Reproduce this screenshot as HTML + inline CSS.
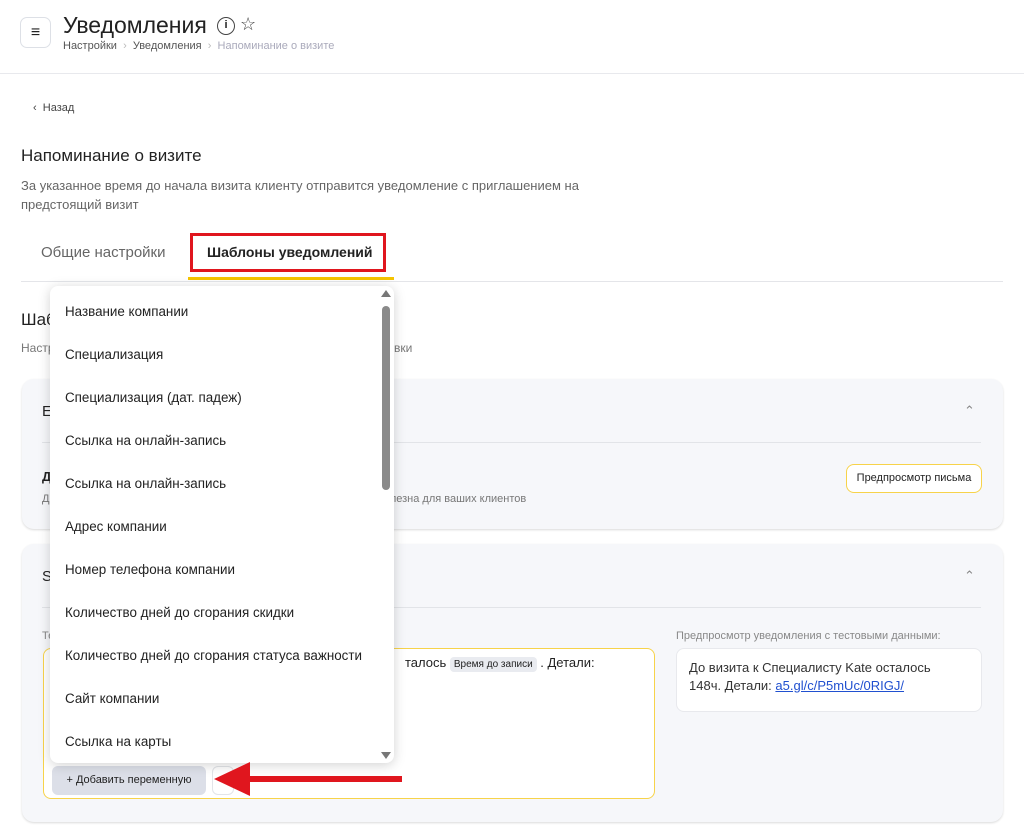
<!DOCTYPE html>
<html><head><meta charset="utf-8"><style>
*{box-sizing:border-box;margin:0;padding:0}
body{width:1024px;height:837px;overflow:hidden;background:#fff;font-family:"Liberation Sans",sans-serif;color:#222;position:relative}
.a{position:absolute}
.card{position:absolute;left:22px;width:981px;background:#f6f7fa;border-radius:12px;box-shadow:0 1px 2px rgba(0,0,0,.15)}
.dd{position:absolute;left:50px;top:286px;width:344px;height:477px;background:#fff;border-radius:8px;box-shadow:0 2px 12px rgba(0,0,0,.18)}
.dd div{position:absolute;left:15px;font-size:13.4px;color:#222}
</style></head><body>
<div class="a" style="left:20px;top:17px;width:31px;height:31px;border:1px solid #dde0e6;border-radius:7px;text-align:center;line-height:29px;font-size:16px">≡</div>
<div class="a" style="left:63px;top:12px;font-size:23px;color:#222">Уведомления</div>
<div class="a" style="left:217px;top:17px;width:18px;height:18px;border:1.5px solid #444;border-radius:50%;font-size:11px;text-align:center;line-height:15px;font-weight:bold">i</div>
<div class="a" style="left:240px;top:14px;font-size:18px;color:#444">☆</div>
<div class="a" style="left:63px;top:40px;font-size:11px;color:#555">Настройки &nbsp;<span style="color:#bbb">›</span>&nbsp; Уведомления &nbsp;<span style="color:#bbb">›</span>&nbsp; <span style="color:#aab">Напоминание о визите</span></div>
<div class="a" style="left:0;top:73px;width:1024px;height:1px;background:#e8e9ed"></div>
<div class="a" style="left:33px;top:102px;font-size:11px;color:#444">‹ &nbsp;Назад</div>
<div class="a" style="left:21px;top:146px;font-size:17px;color:#222">Напоминание о визите</div>
<div class="a" style="left:21px;top:176px;width:620px;font-size:13px;line-height:19px;color:#666">За указанное время до начала визита клиенту отправится уведомление с приглашением на предстоящий визит</div>
<div class="a" style="left:41px;top:244px;font-size:15px;color:#666">Общие настройки</div>
<div class="a" style="left:190px;top:233px;width:196px;height:39px;border:3px solid #e0161e"></div>
<div class="a" style="left:207px;top:244px;font-size:14px;font-weight:bold;color:#222">Шаблоны уведомлений</div>
<div class="a" style="left:21px;top:281px;width:982px;height:1px;background:#e4e5e9"></div>
<div class="a" style="left:188px;top:277px;width:206px;height:3px;background:#f5c400"></div>
<div class="a" style="left:21px;top:310px;font-size:17px">Шаблоны</div>
<div class="a" style="left:21px;top:341px;font-size:12px;color:#777">Настройки</div>
<div class="a" style="left:394px;top:341px;font-size:12px;color:#777">вки</div>
<div class="card" style="top:379px;height:150px">
<div class="a" style="left:20px;top:24px;font-size:15px">E</div>
<div class="a" style="left:942px;top:24px;font-size:13px;color:#888">⌃</div>
<div class="a" style="left:20px;top:63px;width:939px;height:1px;background:#e2e4e8"></div>
<div class="a" style="left:20px;top:90px;font-size:13px;font-weight:bold">Д</div>
<div class="a" style="left:20px;top:114px;font-size:11px;color:#777">Д</div>
<div class="a" style="left:356px;top:114px;font-size:11px;color:#777">полезна для ваших клиентов</div>
<div class="a" style="left:824px;top:85px;width:136px;height:29px;border:1.5px solid #f7d34a;border-radius:8px;background:#fff;font-size:11px;text-align:center;line-height:26px">Предпросмотр письма</div>
</div>
<div class="card" style="top:544px;height:278px">
<div class="a" style="left:20px;top:24px;font-size:15px">S</div>
<div class="a" style="left:942px;top:24px;font-size:13px;color:#888">⌃</div>
<div class="a" style="left:20px;top:63px;width:939px;height:1px;background:#e2e4e8"></div>
<div class="a" style="left:20px;top:86px;font-size:11px;color:#888">Те</div>
<div class="a" style="left:21px;top:104px;width:612px;height:151px;border:1.5px solid #f7d34a;border-radius:8px;background:#fff"></div>
<div class="a" style="left:383px;top:111px;font-size:13px">талось <span style="background:#e9ebf0;border-radius:4px;font-size:10px;padding:2px 4px">Время до записи</span> . Детали:</div>
<div class="a" style="left:30px;top:222px;width:154px;height:29px;background:#dcdfe8;border-radius:6px;font-size:11px;text-align:center;line-height:29px">+ Добавить переменную</div>
<div class="a" style="left:190px;top:222px;width:22px;height:29px;background:#fff;border:1px solid #e2e4e8;border-radius:6px"></div>
<div class="a" style="left:654px;top:86px;font-size:11px;color:#888">Предпросмотр уведомления с тестовыми данными:</div>
<div class="a" style="left:654px;top:104px;width:306px;height:64px;background:#fff;border:1px solid #e8e9ed;border-radius:8px;padding:10px 40px 10px 12px;font-size:13px;line-height:18px;color:#333">До визита к Специалисту Kate осталось 148ч. Детали: <span style="color:#2050d0;text-decoration:underline">a5.gl/c/P5mUc/0RIGJ/</span></div>
</div>
<div class="dd">
<div style="top:18px">Название компании</div>
<div style="top:61px">Специализация</div>
<div style="top:104px">Специализация (дат. падеж)</div>
<div style="top:147px">Ссылка на онлайн-запись</div>
<div style="top:190px">Ссылка на онлайн-запись</div>
<div style="top:233px">Адрес компании</div>
<div style="top:276px">Номер телефона компании</div>
<div style="top:319px">Количество дней до сгорания скидки</div>
<div style="top:362px">Количество дней до сгорания статуса важности</div>
<div style="top:405px">Сайт компании</div>
<div style="top:448px">Ссылка на карты</div>
<span class="a" style="left:331px;top:4px;width:0;height:0;border-left:5px solid transparent;border-right:5px solid transparent;border-bottom:7px solid #777"></span>
<span class="a" style="left:332px;top:20px;width:8px;height:184px;background:#8a8a8a;border-radius:4px"></span>
<span class="a" style="left:331px;top:466px;width:0;height:0;border-left:5px solid transparent;border-right:5px solid transparent;border-top:7px solid #777"></span>
</div>
<svg class="a" style="left:214px;top:760px" width="190" height="38"><rect x="30" y="16" width="158" height="6" fill="#e0161e"/><polygon points="0,19 36,2 36,36" fill="#e0161e"/></svg>
</body></html>
